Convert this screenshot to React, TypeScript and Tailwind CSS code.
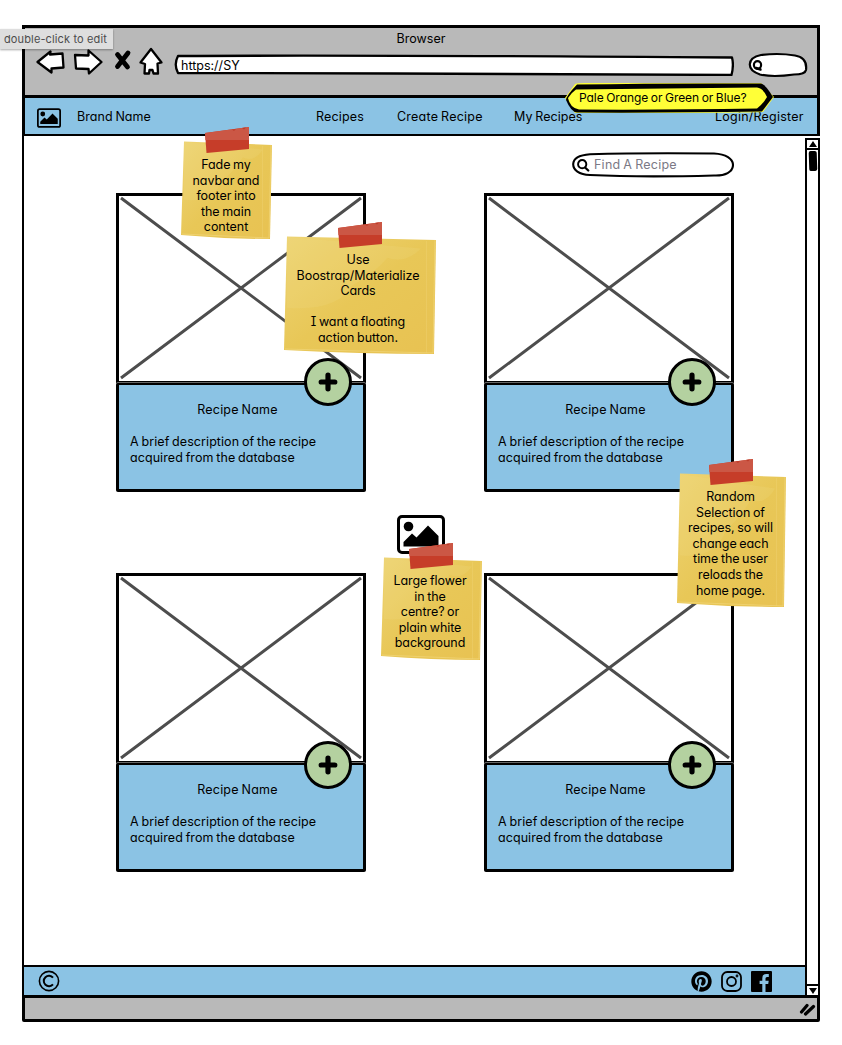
import type { ReactNode } from "react";
import { FaPinterest } from "react-icons/fa";

function PictureIcon({ className, stroke }: { className: string; stroke: number }) {
  return (
    <svg viewBox="0 0 48 39" className={className}>
      <rect x={stroke / 2} y={stroke / 2} width={48 - stroke} height={39 - stroke} rx="3.5" fill="none" stroke="#000" strokeWidth={stroke} />
      <circle cx="11.5" cy="11.5" r="4.8" />
      <path d="M6.500 31.500V27L15 18.500 19.500 22.500 31 10.500 41.500 21V31.500z" />
    </svg>
  );
}

function Magnifier({ className }: { className: string }) {
  return (
    <svg viewBox="0 0 12 12" className={className} fill="none" stroke="#000" strokeLinecap="round">
      <ellipse cx="4.800" cy="4.800" rx="3.800" ry="3.800" strokeWidth="1.800" />
      <path d="M7.700 8 10.400 10.700" strokeWidth="2" />
    </svg>
  );
}

function Toolbar() {
  return (
    <header className="h-[73px] bg-[#b9b9b9] border-[3px] border-b-0 border-black flex flex-col">
      <div className="h-[22px] flex items-center justify-center">Browser</div>
      <div className="flex items-start">
        <svg width="130" height="32" viewBox="35 46.500 130 32" className="ml-[10px] -mt-[3px] shrink-0" fill="#fff" stroke="#000" strokeWidth="2.300" strokeLinejoin="round">
          <path d="M37.500 61.500 50.500 51 50 54 62.500 53 63.500 67 51.500 68 51.500 72z" />
          <path d="M75 54.500 88.500 55 88.500 50 101.500 61.500 89 73 88.500 68.500 76 68z" />
          <path d="M117.500 54 127.500 66.500M128 52.500 117.500 66" strokeWidth="4.800" strokeLinecap="round" />
          <path d="M151 48.500 161.500 62 157.500 63 158 73 153.500 73 152.500 69.500 149.500 69.500 149 73 144.500 73 145 63.500 140.500 62z" />
        </svg>
        <div className="relative ml-[10px] mt-[3px] w-[559px] h-[23px] flex items-center pl-[6px]">
          <svg className="absolute inset-0 -left-px" width="560" height="23" fill="#fff" stroke="#000" strokeWidth="2.300" strokeLinejoin="round">
            <path d="M4 3Q200 2 558 4.500Q560 12 557.500 22Q400 21 220 20.500Q90 20.500 4 20Q-.5 11.500 4 3z" />
          </svg>
          <span className="relative pt-[2px]">https://SY</span>
        </div>
        <div className="relative ml-[14px] mt-[2px] w-[61px] h-[26px]">
          <svg className="absolute inset-0 -left-px" width="61" height="26" fill="#fff" stroke="#000" strokeWidth="2.200">
            <path d="M14 3Q32 .8 48 3.500C57 5 60 10 59 18Q58 22.500 47 22.500Q26 25.500 13 22.500C-1 18-.5 6 14 3z" />
            <ellipse cx="10.500" cy="13" rx="3.600" ry="3.800" />
            <path d="M9 16 13.500 17.500" strokeLinecap="round" strokeWidth="2.400" />
          </svg>
        </div>
      </div>
    </header>
  );
}

function Navbar() {
  return (
    <nav className="h-[41px] -mt-[3px] mb-px bg-[#8bc3e4] border-[3px] border-b-2 border-black flex items-center">
      <PictureIcon className="w-[24px] h-[20px] ml-[12px] mt-[3px]" stroke={3.5} />
      <span className="mt-px ml-[16px] w-[239px] tracking-[0.05px]">Brand Name</span>
      <span className="mt-px w-[81px] tracking-[0.17px]">Recipes</span>
      <span className="mt-px w-[117px] tracking-[0.22px]">Create Recipe</span>
      <span className="mt-px w-[201px] tracking-[0.05px]">My Recipes</span>
      <span className="mt-px tracking-[0.22px]">Login/Register</span>
    </nav>
  );
}

function RecipeCard({ fab }: { fab: string }) {
  return (
    <article className="relative w-[250px] h-[299px] flex flex-col">
      <div className="h-[190px] border-[3px] border-b-[2px] border-black bg-white">
        <svg width="244" height="185" stroke="#4d4d4d" strokeWidth="3">
          <path d="M2 2 242 182M242 2 2 182" />
        </svg>
      </div>
      <div className="h-[109px] border-[3px] border-t-2 border-b-[3px] border-black bg-[#8bc3e4] pt-[17px] pl-[11px] rounded-[2px] shadow-[0_-1px_0_#666]">
        <h3 className="w-[215px] text-center leading-[16px] tracking-[0.2px]">Recipe Name</h3>
        <p className="mt-[16px] leading-[15.500px] tracking-[0.07px] whitespace-nowrap">
          A brief description of the recipe
          <br />
          acquired from the database
        </p>
      </div>
      <button aria-label="Add" className={`absolute w-[48px] h-[48px] rounded-full border-[3px] border-black bg-[#b4d1a0] flex items-center justify-center ${fab}`}>
        <svg width="20" height="20" stroke="#000" strokeWidth="5.200" strokeLinecap="round">
          <path d="M10 3.200V16.800M3.200 10H16.800" />
        </svg>
      </button>
    </article>
  );
}

function Scrollbar() {
  return (
    <div className="w-[16px] h-[859px] border-[2px] border-black bg-white flex flex-col items-center mt-px">
      <div className="w-full h-[10px] border-b-2 border-black flex justify-center items-center">
        <svg width="8" height="6"><path d="M4 0 8 6H0z" /></svg>
      </div>
      <div className="mt-[1px] w-[8px] h-[20px] bg-black rounded-[2px] rotate-[-2deg]" />
      <div className="mt-auto w-full h-[11px] border-t-2 border-black flex justify-center items-center">
        <svg width="8" height="6"><path d="M0 0H8L4 6z" /></svg>
      </div>
    </div>
  );
}

function Footer() {
  return (
    <footer className="h-[32px] w-[785px] bg-[#8bc3e4] border-2 border-black flex items-center pl-[14px]">
      <svg width="22" height="22" viewBox="0 0 22 22" fill="none" stroke="#000" strokeWidth="1.600">
        <circle cx="11" cy="11" r="9.600" />
        <path d="M15 7.700A5.200 5.200 0 1 0 15 14.300" strokeWidth="2" />
      </svg>
      <FaPinterest className="ml-auto w-[21px] h-[21px]" />
      <svg width="21" height="21" viewBox="0 0 21 21" className="ml-[9px]" fill="none" stroke="#000" strokeWidth="1.800">
        <rect x="1" y="1" width="19" height="19" rx="5.200" />
        <circle cx="10.500" cy="10.500" r="4.500" />
        <circle cx="16" cy="5" r=".5" />
      </svg>
      <svg width="21" height="21" viewBox="0 0 21 21" className="ml-[9px] mr-[33px]">
        <path d="M1 0H20Q21 0 21 1V20Q21 21 20 21H14.500V13H17.200L17.700 9.800H14.500V7.500Q14.500 6 16 6H17.800V3.100H15.400Q11.300 3.100 11.300 7.200V9.800H8.600V13H11.300V21H1Q0 21 0 20V1Q0 0 1 0z" />
      </svg>
    </footer>
  );
}

function Note({ place, w, h, tape, pad, children }: { place: string; w: number; h: number; tape: number; pad: string; children: ReactNode }) {
  const id = `note-${w}-${h}`;
  return (
    <aside className={`absolute text-center leading-[15.600px] tracking-[-0.06px] whitespace-nowrap ${place} ${pad}`} style={{ width: w, height: h }}>
      <svg className="absolute inset-0" width={w} height={h}>
        <defs>
          <linearGradient id={id} x1="0" y1="0" x2="1" y2="1">
            <stop offset="0" stopColor="#eed474" />
            <stop offset=".5" stopColor="#e8c757" />
            <stop offset="1" stopColor="#e8c252" />
          </linearGradient>
        </defs>
        <path d={`M3 14.500L${w} 18L${w - 2} ${h}Q${w / 2} ${h} 0 ${h - 4}z`} fill={`url(#${id})`} />
        <path d={`M3 ${h * 0.65}Q${w * 0.35} ${h * 0.68} ${w * 0.45} ${h * 0.48}Q${w * 0.6} ${h * 0.38} ${w * 0.68} ${h * 0.27}Q${w * 0.8} ${h * 0.32} ${w * 0.9} ${h * 0.2}L3 15z`} fill="#f2da88" opacity=".2" />
        <path d={`M${w - 9.5} 19V${h - 1}`} stroke="#f1d679" opacity=".35" />
        <path d={`M${w - 1} 18L${w - 3} ${h - 1}L1 ${h - 5}`} fill="none" stroke="#f1d679" opacity=".7" />
        <g transform={`translate(${tape} 0)`}>
          <path d="M0 6 44 0V22L1.500 26z" fill="#c63d29" />
          <path d="M0 6 44 0V13H.5z" fill="#cb5745" />
          <path d="M27 2.500l4-.5-2 2zM37 1l4-.5-2 2z" fill="#bd3c2a" />
        </g>
      </svg>
      <div className="relative">{children}</div>
    </aside>
  );
}

export default function App() {
  return (
    <div className="relative w-[842px] h-[1045px] overflow-hidden bg-white pl-[22px] pt-[25px] text-black text-[12.500px] [word-spacing:-0.8px] leading-[16px] font-[Inter,sans-serif] [font-feature-settings:'cv11','cv08']">
      <div className="w-[798px] flex flex-col">
        <Toolbar />
        <Navbar />
        <div className="flex h-[860px]">
          <div className="w-[783px] flex flex-col">
            <main className="h-[829px] -mt-px pt-px shrink-0 border-l-2 border-black flex flex-col pl-[92px]">
              <label className="relative mt-[15px] ml-[455px] w-[163px] h-[26px] flex items-center pl-[6px] text-[#7b7985]">
                <svg className="absolute inset-0" width="163" height="26" fill="#fff" stroke="#000" strokeWidth="2.100">
                  <path d="M19 2.200Q70 .8 143 1.500C155 2 162 7 162 13C162 20 154 24 143 23.500Q70 25.500 19 23C8 22.500 2 18 2.200 12C2.500 6 8 3 19 2.200z" />
                </svg>
                <Magnifier className="relative w-[13px] h-[13px] mr-[4px]" />
                <span className="relative tracking-[0.24px]">Find A Recipe</span>
              </label>
              <div className="mt-[15px] grid grid-cols-[250px_250px] gap-x-[118px] gap-y-[81px]">
                <RecipeCard fab="left-[188px] top-[165px]" />
                <RecipeCard fab="left-[184px] top-[165px]" />
                <RecipeCard fab="left-[188px] top-[168px]" />
                <RecipeCard fab="left-[184px] top-[168px]" />
              </div>
            </main>
            <Footer />
          </div>
          <Scrollbar />
        </div>
        <div className="h-[27px] -mt-[2px] bg-[#b9b9b9] border-[3px] border-black rounded-b-[2px] flex justify-end items-center pr-px">
          <svg width="17" height="14" stroke="#000" strokeWidth="3.200" strokeLinecap="round">
            <path d="M2.500 10 8 3.500M6.500 12 14.500 4.500" />
          </svg>
        </div>
      </div>

      <div className="absolute left-0 top-[29px] w-[113px] h-[20px] bg-[#dedede] text-[#4c4c4c] text-[11px] leading-[20px] pl-[4px] tracking-[0.13px] [word-spacing:0px] shadow-[0_1px_2px_rgba(0,0,0,0.35)] whitespace-nowrap [font-feature-settings:normal]">double-click to edit</div>

      <div className="absolute left-[565px] top-[82px] w-[210px] h-[32px] pl-[14px] leading-[31px] text-[12px] whitespace-nowrap">
        <svg className="absolute inset-0" width="210" height="32">
          <path d="M0 16 10 2Q12 1 20 1H196L209 15 198 30Q190 31 10 31z" fill="#ffff37" />
          <path d="M1 18Q1 14 12 2.500Q100 1 196 1.500Q200 2 208 15L197 29.500Q100 31 12 30.500Q6 30 1 18z" />
          <path d="M3 16Q6 11 11 7.500Q100 6.500 192 5.500Q198 6 202 15Q198 22 192 26.500Q100 28 14 27.500Q5 26 3 16z" fill="#ffff37" />
        </svg>
        <span className="relative tracking-[-0.04px]">Pale Orange or Green or Blue?</span>
      </div>

      <div className="absolute left-[397px] top-[515px]">
        <PictureIcon className="w-[48px] h-[39px]" stroke={3} />
      </div>

      <Note place="left-[181px] top-[127px]" w={91} h={112} tape={24} pad="pt-[30px] pr-[1px]">
        Fade my<br />navbar and<br />footer into<br />the main<br />content
      </Note>
      <Note place="left-[284px] top-[222px]" w={152} h={132} tape={54} pad="pt-[30px] pr-[4px]">
        Use<br />Boostrap/Materialize<br />Cards<br /><br />I want a floating<br />action button.
      </Note>
      <Note place="left-[677px] top-[459px]" w={109} h={148} tape={32} pad="pt-[30px] pr-[2px]">
        Random<br />Selection of<br />recipes, so will<br />change each<br />time the user<br />reloads the<br />home page.
      </Note>
      <Note place="left-[381px] top-[543px]" w={101} h={117} tape={28} pad="pt-[30px] pr-[3px]">
        Large flower<br />in the<br />centre? or<br />plain white<br />background
      </Note>
    </div>
  );
}
